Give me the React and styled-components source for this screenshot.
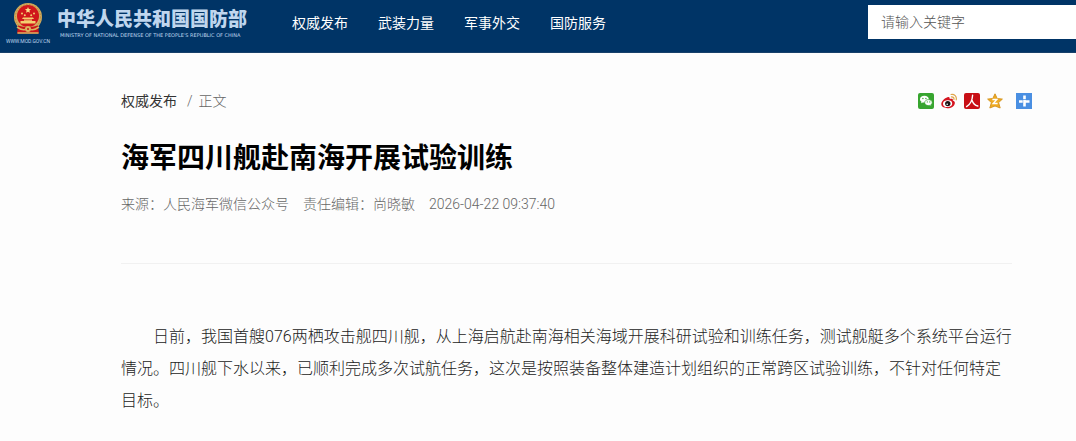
import React from "react";
import styled, { createGlobalStyle } from "styled-components";

const NAV_ITEMS = ["权威发布", "武装力量", "军事外交", "国防服务"];

const Emblem = () => (
  <svg width="30" height="32" viewBox="0 0 30 32" aria-hidden="true">
    <circle cx="15" cy="14" r="14" fill="#d3ab5c" />
    <circle cx="15" cy="14" r="12.6" fill="none" stroke="#b98a3e" strokeDasharray="1.5 1.5" />
    <circle cx="15" cy="13" r="11" fill="#d0171b" />
    <path d="M15 4l.9 2 2.2.2-1.7 1.4.5 2.2-1.9-1.1-1.9 1.1.5-2.2-1.7-1.4 2.2-.2z" fill="#fbe08a" />
    <g fill="#f4cf70">
      <circle cx="9" cy="10.5" r="1" />
      <circle cx="11.8" cy="12.2" r="1" />
      <circle cx="18.2" cy="12.2" r="1" />
      <circle cx="21" cy="10.5" r="1" />
      <path d="M10 14.5h10l1 1.5H9zM11 16.5h8v1.2h-8zM7.5 18h15v2.5h-15z" />
    </g>
    <path d="M5 22.5Q15 26 25 22.5L26 30.5H4z" fill="#c9151a" />
    <path d="M4 24q5 3.5 8 2.5M26 24q-5 3.5-8 2.5M4.5 30h21" stroke="#dcb45f" strokeWidth="1.6" fill="none" />
    <circle cx="15" cy="26" r="3" fill="#dcb45f" />
    <circle cx="15" cy="26" r="1" fill="#c9151a" />
  </svg>
);

const WechatIcon = () => (
  <svg width="16" height="16" viewBox="0 0 16 16" aria-hidden="true">
    <rect width="16" height="16" rx="2" fill="#37a52f" />
    <path d="M6.4 2.8C3.8 2.8 2 4.3 2 6.2c0 1.1.6 2 1.5 2.6L3.1 10.3l1.7-.9c.5.1 1 .2 1.6.2 2.5 0 4.4-1.5 4.4-3.4S8.9 2.8 6.4 2.8z" fill="#fff" />
    <path d="M10.5 6.6c-2.2 0-3.8 1.3-3.8 3s1.6 3 3.8 3c.4 0 .9-.1 1.3-.2l1.5.8-.4-1.4c.8-.5 1.3-1.3 1.3-2.2 0-1.7-1.6-3-3.7-3z" fill="#fff" stroke="#37a52f" strokeWidth=".7" />
    <g fill="#37a52f">
      <circle cx="4.9" cy="5.5" r=".7" />
      <circle cx="7.9" cy="5.5" r=".7" />
      <circle cx="9.3" cy="8.9" r=".6" />
      <circle cx="11.8" cy="8.9" r=".6" />
    </g>
  </svg>
);

const WeiboIcon = () => (
  <svg width="16" height="16" viewBox="0 0 16 16" aria-hidden="true">
    <path d="M6.5 4.2C8 3.7 9 4.4 8.7 6c2.3-.8 3.7-.2 3.1 1.4 1.7.5 2.3 1.6 2 3-.5 2.7-3.6 4.8-7.3 4.8C3 15.2.3 13.5.3 11c0-2.7 3.3-6 6.2-6.8z" fill="#d4141f" />
    <ellipse cx="6.6" cy="10.6" rx="4.6" ry="3.4" fill="#fff" transform="rotate(-8 6.6 10.6)" />
    <circle cx="6.8" cy="10.6" r="2.7" fill="#1c1214" />
    <circle cx="6.2" cy="11.2" r=".8" fill="#fff" />
    <path d="M10 1.5c3.4-.7 6 2 5.2 5.4M10.4 3.9c1.7-.3 2.9 1 2.5 2.6" fill="none" stroke="#e0a64a" strokeWidth="1.2" strokeLinecap="round" />
  </svg>
);

const PeopleIcon = () => (
  <svg width="16" height="16" viewBox="0 0 16 16" aria-hidden="true">
    <rect width="16" height="16" rx="2" fill="#c80f16" />
    <path d="M8.6 2.3C8.3 7.5 6.3 11.5 2.6 13.6M8 7.2c1 3 2.7 5.1 5.8 5.8" fill="none" stroke="#fff" strokeWidth="1.4" strokeLinecap="round" />
  </svg>
);

const QzoneIcon = () => (
  <svg width="16" height="16" viewBox="0 0 16 16" aria-hidden="true">
    <path d="M8 .8l2.2 4.7 5.2.6-3.8 3.5 1.6 5.4L8 13l-5.2 2 1.6-5.4L.6 6.1l5.2-.6z" fill="#efab22" stroke="#d2921c" strokeWidth=".9" strokeLinejoin="round" />
    <path d="M5.4 6.5h4.4L6.2 10.5h4.4" fill="none" stroke="#fff" strokeWidth="1.4" />
  </svg>
);

const MoreIcon = () => (
  <svg width="16" height="16" viewBox="0 0 16 16" aria-hidden="true">
    <rect width="16" height="16" fill="#4a8fe2" />
    <path d="M8.5 2.5v3.7M8.5 7v6.5M3 8.5h3.7M7.2 8.5h6.3" stroke="#fff" strokeWidth="2.6" />
  </svg>
);

const SHARE_ITEMS = [
  { label: "微信", Icon: WechatIcon },
  { label: "微博", Icon: WeiboIcon },
  { label: "人民网", Icon: PeopleIcon },
  { label: "QQ空间", Icon: QzoneIcon },
];

const App = () => {
  return (
    <>
      <GlobalStyle />
      <Header>
        <Brand href="#">
          <EmblemBlock>
            <Emblem />
            <SiteUrl>WWW.MOD.GOV.CN</SiteUrl>
          </EmblemBlock>
          <BrandText>
            <BrandName>中华人民共和国国防部</BrandName>
            <BrandSub>MINISTRY OF NATIONAL DEFENSE OF THE PEOPLE'S REPUBLIC OF CHINA</BrandSub>
          </BrandText>
        </Brand>
        <Nav>
          {NAV_ITEMS.map((item) => (
            <NavLink key={item} href="#">
              {item}
            </NavLink>
          ))}
        </Nav>
        <Search role="search">
          <SearchInput type="text" placeholder="请输入关键字" aria-label="请输入关键字" />
        </Search>
      </Header>
      <Main>
        <TopRow>
          <Breadcrumb>
            <a href="#">权威发布</a>
            <Current>
              <span>/</span>
              <span>正文</span>
            </Current>
          </Breadcrumb>
          <ShareList>
            {SHARE_ITEMS.map(({ label, Icon }) => (
              <ShareButton key={label} type="button" aria-label={label}>
                <Icon />
              </ShareButton>
            ))}
            <ShareButton type="button" aria-label="更多" $more>
              <MoreIcon />
            </ShareButton>
          </ShareList>
        </TopRow>
        <Article>
          <Title>海军四川舰赴南海开展试验训练</Title>
          <Meta>
            <span>来源：人民海军微信公众号</span>
            <span>责任编辑：尚晓敏</span>
            <time>2026-04-22 09:37:40</time>
          </Meta>
          <Body>
            日前，我国首艘076两栖攻击舰四川舰，从上海启航赴南海相关海域开展科研试验和训练任务，测试舰艇多个系统平台运行情况。四川舰下水以来，已顺利完成多次试航任务，这次是按照装备整体建造计划组织的正常跨区试验训练，不针对任何特定目标。
          </Body>
        </Article>
      </Main>
    </>
  );
};

export default App;

const GlobalStyle = createGlobalStyle`
  * {
    box-sizing: border-box;
  }
  body {
    margin: 0;
    background: #fdfdfd;
    color: #222;
    font-family: Roboto, "Noto Sans CJK SC", sans-serif;
    font-size: 14px;
    font-weight: 300;
    line-height: 20px;
  }
  a {
    color: inherit;
    text-decoration: none;
  }
`;

const Header = styled.header`
  display: flex;
  align-items: flex-start;
  height: 53px;
  padding-left: 6px;
  background: #003466;
  border-bottom: 1px solid #17406a;
`;
const Brand = styled.a`
  display: flex;
  gap: 7px;
  padding-top: 3px;
  color: #bfd6ee;
  font-weight: 400;
  white-space: nowrap;
`;
const EmblemBlock = styled.div`
  width: 44px;
  display: flex;
  flex-direction: column;
  align-items: center;
  gap: 2px;
`;
const SiteUrl = styled.span`
  font-size: 5px;
  line-height: 8px;
`;
const BrandText = styled.div`
  width: 190px;
  padding-top: 6px;
`;
const BrandName = styled.div`
  font-size: 19px;
  font-weight: 900;
  line-height: 22px;
`;
const BrandSub = styled.div`
  padding-left: 3px;
  font-family: "DejaVu Sans", sans-serif;
  font-size: 5px;
  line-height: 8px;
`;
const Nav = styled.nav`
  display: flex;
  gap: 30px;
  padding: 13px 0 0 45px;
`;
const NavLink = styled.a`
  color: #fff;
  font-weight: 400;
  white-space: nowrap;
`;
const Search = styled.form`
  width: 208px;
  margin-left: auto;
  padding-top: 5px;
`;
const SearchInput = styled.input`
  display: block;
  width: 100%;
  height: 34px;
  padding: 0 13px;
  border: 0;
  border-radius: 0;
  background: #fff;
  font: inherit;
  &::placeholder {
    color: #555;
  }
`;

const Main = styled.main`
  padding: 38px 44px 24px 121px;
`;
const TopRow = styled.div`
  display: flex;
  justify-content: space-between;
  align-items: center;
`;
const Breadcrumb = styled.nav`
  display: flex;
  gap: 10px;
  color: #333;
  font-weight: 400;
`;
const Current = styled.span`
  display: flex;
  gap: 6px;
  color: #666;
  font-weight: 300;
`;
const ShareList = styled.div`
  display: flex;
  gap: 7px;
`;
const ShareButton = styled.button`
  display: block;
  width: 16px;
  height: 16px;
  margin-left: ${({ $more }) => ($more ? "6px" : "0")};
  padding: 0;
  border: 0;
  background: none;
  cursor: pointer;
  svg {
    display: block;
  }
`;

const Article = styled.article`
  margin-right: 20px;
`;
const Title = styled.h1`
  margin: 28px 0 0;
  color: #000;
  font-size: 28px;
  font-weight: 700;
  line-height: 40px;
`;
const Meta = styled.div`
  display: flex;
  gap: 14px;
  padding: 15px 0 49px;
  border-bottom: 1px solid #f1f1f1;
  color: #666;
`;
const Body = styled.p`
  margin: 57px 0 0;
  font-size: 16px;
  line-height: 32px;
  text-indent: 2em;
`;
